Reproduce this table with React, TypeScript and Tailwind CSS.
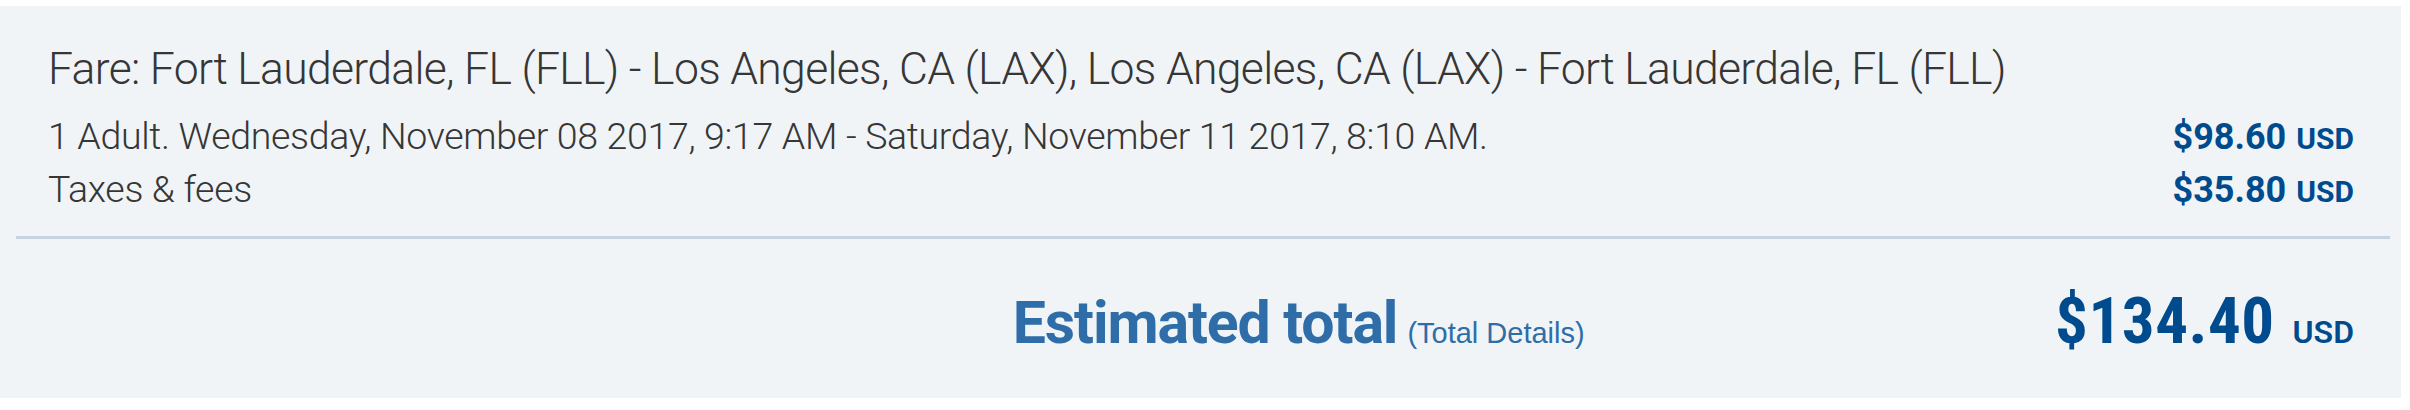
const fare = {
  route: 'Fare: Fort Lauderdale, FL (FLL) - Los Angeles, CA (LAX), Los Angeles, CA (LAX) - Fort Lauderdale, FL (FLL)',
  trip: '1 Adult. Wednesday, November 08 2017, 9:17 AM - Saturday, November 11 2017, 8:10 AM.',
  base: '$98.60',
  taxes: '$35.80',
  total: '$134.40',
};

function Price({ amount }: { amount: string }) {
  return (
    <span className="flex items-baseline gap-[10px] font-bold text-[#004b8d]">
      <span className="text-[36px] leading-none">{amount}</span>
      <span className="text-[30px] leading-none">USD</span>
    </span>
  );
}

export default function App() {
  return (
    <div className="bg-white pt-[6px] font-['Roboto',sans-serif]">
      <div className="w-[2401px] h-[392px] bg-[#f0f4f7]">
        <div className="px-[48px] pr-[47px] pt-[41px] text-[#363636] font-[350]">
          <h2 className="text-[44.5px] leading-[45px] tracking-[-0.68px]">{fare.route}</h2>
          <div className="mt-[26px] flex items-baseline justify-between text-[37.5px] leading-[37.5px]">
            <span className="tracking-[-0.33px]">{fare.trip}</span>
            <Price amount={fare.base} />
          </div>
          <div className="mt-[15px] flex items-baseline justify-between text-[37.5px] leading-[37.5px]">
            <span className="tracking-[-0.33px]">Taxes &amp; fees</span>
            <Price amount={fare.taxes} />
          </div>
        </div>
        <div className="ml-[16px] mr-[11px] mt-[28px] h-[3px] bg-[#c7d4df]" />
        <div className="grid grid-cols-3 items-baseline pt-[50px]">
          <div className="col-span-2 pr-[16px] flex items-baseline justify-end gap-[10px]">
            <span className="text-[59px] leading-none font-bold text-[#2f6da9] tracking-[-1.1px]">Estimated total</span>
            <a href="#" className="text-[29px] leading-none text-[#2f6da9] font-['Liberation_Sans',Arial,sans-serif]">(Total Details)</a>
          </div>
          <div className="pr-[47px] flex items-baseline justify-end gap-[18px] text-[#004b8d]">
            <span className="text-[65px] leading-none font-bold font-stretch-75% tracking-[0.5px]">{fare.total}</span>
            <span className="text-[32px] leading-none font-semibold">USD</span>
          </div>
        </div>
      </div>
    </div>
  );
}
